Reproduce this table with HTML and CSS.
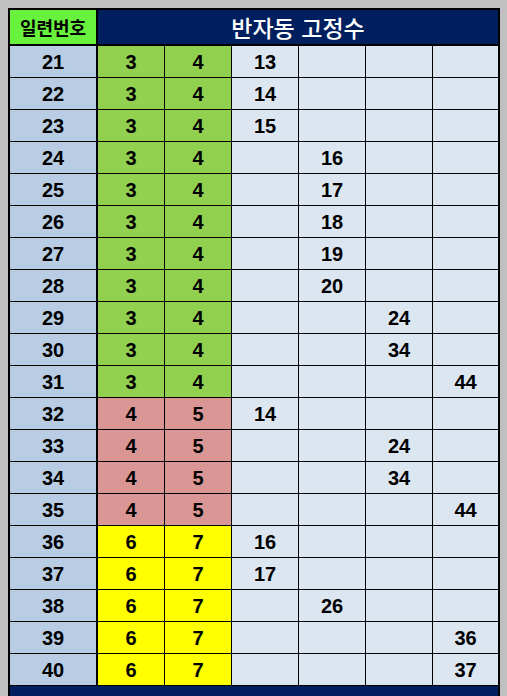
FILE: index.html
```html
<!DOCTYPE html>
<html lang="ko">
<head>
<meta charset="utf-8">
<title>반자동 고정수</title>
<link rel="stylesheet" href="styles.css">
</head>
<body>
<div class="sheet">
  <div class="hd-id">일련번호</div>
  <div class="hd-title">반자동 고정수</div>

  <div class="c id">21</div><div class="c g">3</div><div class="c g">4</div><div class="c e">13</div><div class="c e"></div><div class="c e"></div><div class="c e"></div>
  <div class="c id">22</div><div class="c g">3</div><div class="c g">4</div><div class="c e">14</div><div class="c e"></div><div class="c e"></div><div class="c e"></div>
  <div class="c id">23</div><div class="c g">3</div><div class="c g">4</div><div class="c e">15</div><div class="c e"></div><div class="c e"></div><div class="c e"></div>
  <div class="c id">24</div><div class="c g">3</div><div class="c g">4</div><div class="c e"></div><div class="c e">16</div><div class="c e"></div><div class="c e"></div>
  <div class="c id">25</div><div class="c g">3</div><div class="c g">4</div><div class="c e"></div><div class="c e">17</div><div class="c e"></div><div class="c e"></div>
  <div class="c id">26</div><div class="c g">3</div><div class="c g">4</div><div class="c e"></div><div class="c e">18</div><div class="c e"></div><div class="c e"></div>
  <div class="c id">27</div><div class="c g">3</div><div class="c g">4</div><div class="c e"></div><div class="c e">19</div><div class="c e"></div><div class="c e"></div>
  <div class="c id">28</div><div class="c g">3</div><div class="c g">4</div><div class="c e"></div><div class="c e">20</div><div class="c e"></div><div class="c e"></div>
  <div class="c id">29</div><div class="c g">3</div><div class="c g">4</div><div class="c e"></div><div class="c e"></div><div class="c e">24</div><div class="c e"></div>
  <div class="c id">30</div><div class="c g">3</div><div class="c g">4</div><div class="c e"></div><div class="c e"></div><div class="c e">34</div><div class="c e"></div>
  <div class="c id">31</div><div class="c g">3</div><div class="c g">4</div><div class="c e"></div><div class="c e"></div><div class="c e"></div><div class="c e">44</div>
  <div class="c id">32</div><div class="c r">4</div><div class="c r">5</div><div class="c e">14</div><div class="c e"></div><div class="c e"></div><div class="c e"></div>
  <div class="c id">33</div><div class="c r">4</div><div class="c r">5</div><div class="c e"></div><div class="c e"></div><div class="c e">24</div><div class="c e"></div>
  <div class="c id">34</div><div class="c r">4</div><div class="c r">5</div><div class="c e"></div><div class="c e"></div><div class="c e">34</div><div class="c e"></div>
  <div class="c id">35</div><div class="c r">4</div><div class="c r">5</div><div class="c e"></div><div class="c e"></div><div class="c e"></div><div class="c e">44</div>
  <div class="c id">36</div><div class="c y">6</div><div class="c y">7</div><div class="c e">16</div><div class="c e"></div><div class="c e"></div><div class="c e"></div>
  <div class="c id">37</div><div class="c y">6</div><div class="c y">7</div><div class="c e">17</div><div class="c e"></div><div class="c e"></div><div class="c e"></div>
  <div class="c id">38</div><div class="c y">6</div><div class="c y">7</div><div class="c e"></div><div class="c e">26</div><div class="c e"></div><div class="c e"></div>
  <div class="c id">39</div><div class="c y">6</div><div class="c y">7</div><div class="c e"></div><div class="c e"></div><div class="c e"></div><div class="c e">36</div>
  <div class="c id">40</div><div class="c y">6</div><div class="c y">7</div><div class="c e"></div><div class="c e"></div><div class="c e"></div><div class="c e">37</div>

  <div class="footer"></div>
</div>
</body>
</html>
```

FILE: styles.css
```css
html, body {
  margin: 0;
  padding: 0;
  background: #c0c0c0;
  height: 696px;
  overflow: hidden;
}

.sheet {
  margin: 8px 0 0 8px;
  width: 488px;
  border: 2px solid #000;
  background: #000;
  display: grid;
  grid-template-columns: 87px 66px 66px 66px 66px 66px 65px;
  grid-template-rows: 35px repeat(20, 31px) 24px;
  column-gap: 1px;
  row-gap: 1px;
  font-family: "Liberation Sans", Arial, sans-serif;
}

.hd-id {
  background: #68f23e;
  margin: 0 1px 1px 0;
  display: flex;
  align-items: center;
  justify-content: center;
  font-family: "Noto Sans CJK KR", "Noto Sans", sans-serif;
  font-weight: 700;
  font-size: 18px;
  color: #000;
}

.hd-title {
  grid-column: 2 / -1;
  background: #001f5f;
  margin-bottom: 1px;
  display: flex;
  align-items: center;
  justify-content: center;
  font-family: "Noto Sans CJK KR", "Noto Sans", sans-serif;
  font-weight: 500;
  font-size: 23px;
  color: #fff;
}

.c {
  display: flex;
  align-items: center;
  justify-content: center;
  padding-top: 1px;
  font-weight: 700;
  font-size: 20px;
  color: #000;
}

.id {
  background: #b8cce4;
  margin-right: 1px;
}

.g { background: #92d050; }
.r { background: #da9694; }
.y { background: #ffff00; }
.e { background: #dce6f1; }

.footer {
  grid-column: 1 / -1;
  background: #001f5f;
}
```
